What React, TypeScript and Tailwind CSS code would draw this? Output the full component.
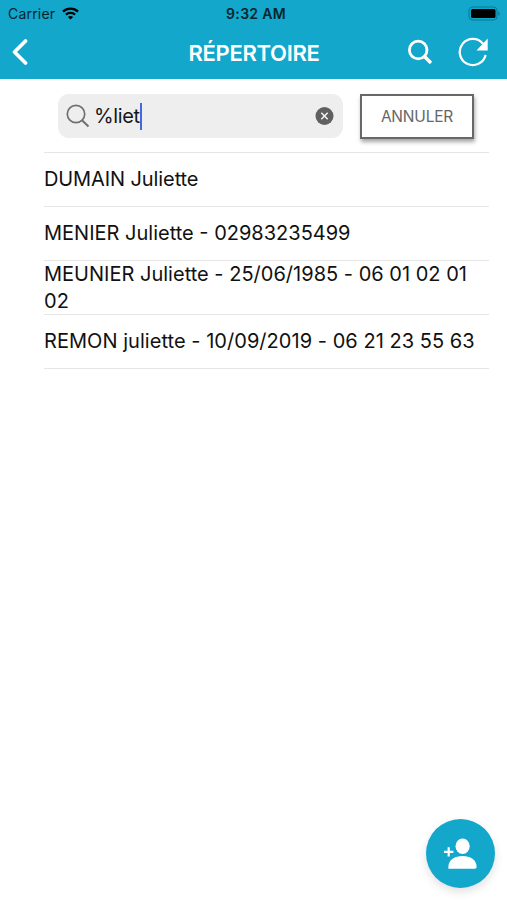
import React from "react";

const contacts = [
  { label: "DUMAIN Juliette", style: "tracking-[-0.1px]" },
  { label: "MENIER Juliette - 02983235499", style: "tracking-[0px]" },
  { label: "MEUNIER Juliette - 25/06/1985 - 06 01 02 01 02", style: "tracking-[0.01px]" },
  { label: "REMON juliette - 10/09/2019 - 06 21 23 55 63", style: "tracking-[0.04px]" },
];

function StatusBar() {
  return (
    <div className="grid h-[27px] grid-cols-3 items-center text-[14px] leading-none text-[#06252e]">
      <div className="flex items-center pl-[8px]">
        <span className="tracking-[0.2px]">Carrier</span>
        <svg className="ml-[7px]" width="17" height="13" viewBox="0 0 17 13" fill="none" stroke="#000" strokeWidth="2.3">
          <path d="M1 4.6C5.2.6 11.8.6 16 4.6" />
          <path d="M3.9 7.6c2.6-2.4 6.6-2.4 9.2 0" />
          <path d="M8.5 12.6 5.9 10c1.5-1.3 3.7-1.3 5.2 0z" fill="#000" stroke="none" />
        </svg>
      </div>
      <div className="pl-[5px] text-center font-semibold tracking-[0.3px]">9:32 AM</div>
      <div className="flex justify-end pr-[6px]">
        <svg width="33" height="15" viewBox="0 0 33 15">
          <rect x="1" y="1" width="28" height="13" rx="3.5" fill="none" stroke="#0c7790" />
          <rect x="3" y="3" width="24.5" height="9" rx="1.5" fill="#000" />
          <path d="M30.3 5.2c1.8.8 1.8 3.8 0 4.6z" fill="#0c7790" />
        </svg>
      </div>
    </div>
  );
}

function NavBar() {
  return (
    <div className="grid h-[51px] grid-cols-[100px_1fr_100px] items-center text-white">
      <svg className="mb-[2px] ml-[10px]" width="18" height="28" viewBox="0 0 18 28" fill="none" stroke="currentColor" strokeWidth="3.7" strokeLinecap="round" strokeLinejoin="round">
        <path d="M15.5 3 4.5 14l11 11" />
      </svg>
      <h1 className="pl-px text-center text-[22px] font-semibold leading-none tracking-[-0.3px]">RÉPERTOIRE</h1>
      <div className="mb-px flex items-center">
        <svg width="26" height="26" viewBox="0 0 26 26" fill="none" stroke="currentColor">
          <circle cx="11.2" cy="11" r="8.8" strokeWidth="2.8" />
          <path d="m17 17 7 7" strokeWidth="3.4" />
        </svg>
        <svg className="ml-[25px]" width="31" height="30" viewBox="0 0 31 30" fill="none" stroke="currentColor" strokeWidth="2.3">
          <path d="M27.6 18A13.1 13.1 0 1 1 25 6.7" />
          <path d="M29.7 1.5v12H18.5z" fill="currentColor" stroke="none" />
        </svg>
      </div>
    </div>
  );
}

function SearchRow() {
  return (
    <div className="flex h-[73px] items-start pl-[58px] pt-[15px]">
      <div className="flex h-[44px] w-[285px] items-center rounded-[11px] bg-[#eeeeee] pl-[8px] pr-[9px]">
        <svg width="24" height="24" viewBox="0 0 24 24" fill="none" stroke="#707070" strokeWidth="1.7">
          <circle cx="10" cy="10" r="8.7" />
          <path d="m16 16.2 6.5 6.3" strokeWidth="2" />
        </svg>
        <span className="ml-[4px] text-[20px] leading-none tracking-[-0.4px] text-[#161616]">%liet</span>
        <span className="h-[27px] w-[2px] bg-[#4169e1]" />
        <svg className="ml-auto" width="19" height="19" viewBox="0 0 19 19">
          <circle cx="9.5" cy="9" r="9" fill="#606060" />
          <path d="m6.3 5.8 6.4 6.4m0-6.4-6.4 6.4" stroke="#f4f4f4" strokeWidth="1.5" />
        </svg>
      </div>
      <button className="ml-[17px] h-[45px] w-[114px] border-2 border-[#686868] bg-white text-[15.5px] leading-none tracking-[-0.2px] text-[#666666] shadow-[1px_3px_4px_rgba(0,0,0,0.35)]">
        ANNULER
      </button>
    </div>
  );
}

export default function App() {
  return (
    <div className="flex h-[900px] w-[507px] flex-col bg-white font-['Inter','Liberation_Sans',sans-serif]">
      <header className="h-[79px] shrink-0 bg-[#13a7cc]">
        <StatusBar />
        <NavBar />
      </header>
      <SearchRow />
      <ul className="ml-[44px] w-[445px] border-t border-[#e6e6e6] text-[20px] leading-[27px] text-[#111111]">
        {contacts.map((c) => (
          <li key={c.label} className="flex h-[54px] items-center border-b border-[#e6e6e6]">
            <span className={c.style}>{c.label}</span>
          </li>
        ))}
      </ul>
      <button className="mb-[12px] ml-auto mr-[12px] mt-auto flex h-[69px] w-[69px] items-center justify-center rounded-full bg-[#13a7cc] shadow-[0_4px_10px_rgba(0,0,0,0.12)]">
        <svg className="mr-px" width="34" height="32" viewBox="0 0 34 32" fill="#fff">
          <ellipse cx="19.6" cy="8.2" rx="7.1" ry="7.7" />
          <path d="M5.4 30.8v-2c0-7 6.5-10.8 14.1-10.8s14.1 3.8 14.1 10.8c0 1.3-.6 2-1.8 2z" />
          <path d="M1 13.9h9.4M5.7 9.2v9.4" stroke="#fff" strokeWidth="2.2" />
        </svg>
      </button>
    </div>
  );
}
